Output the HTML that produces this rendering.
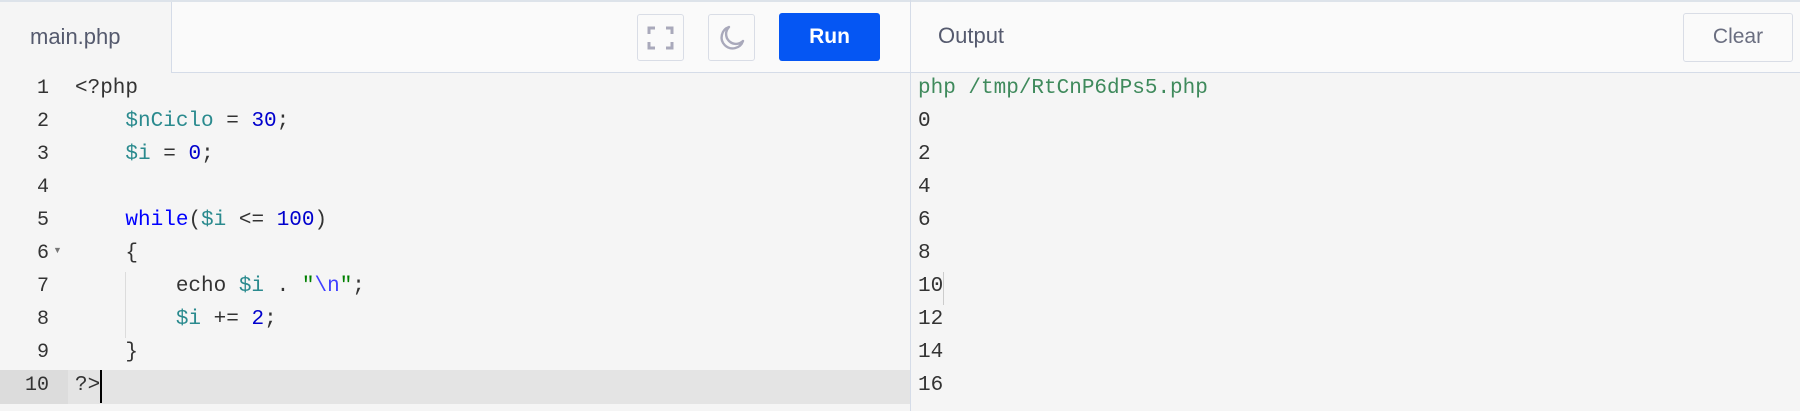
<!DOCTYPE html>
<html><head><meta charset="utf-8"><style>
*{margin:0;padding:0;box-sizing:border-box}
body{width:1800px;height:411px;background:#f5f5f5;position:relative;overflow:hidden;font-family:"Liberation Sans",sans-serif}
.topline{position:absolute;left:0;top:0;width:1800px;height:2px;background:#dde3ea}
.hdr{position:absolute;top:2px;height:71px;background:#fafafa;border-bottom:1px solid #d5dce8}
.tab{position:absolute;left:0;top:2px;width:172px;height:71px;background:#f5f5f5;border-right:1px solid #d5dce8}
.tab span{position:absolute;left:30px;top:22px;font-size:22px;color:#555a6e}
.btn{position:absolute;top:14px;height:47px;border:1px solid #d9dde6;border-radius:3px;background:#fafafa}
.run{position:absolute;left:779px;top:13px;width:101px;height:48px;background:#0556f3;border-radius:3px;color:#fff;font-weight:bold;font-size:21px;text-align:center;line-height:48px}
.div{position:absolute;left:910px;top:0;width:1px;height:411px;background:#d5dce8}
.code{position:absolute;font-family:"Liberation Mono",monospace;font-size:21px;line-height:33px;white-space:pre;color:#333}
.ln{position:absolute;left:0;width:49px;font-family:"Liberation Mono",monospace;font-size:20px;line-height:33px;color:#333;text-align:right;white-space:pre}
.v{color:#2a8a8e}.n{color:#0000cd}.k{color:#0000ff}.s{color:#008000}.e{color:#3f3fff}
</style></head><body>
<div class="topline"></div>
<div class="hdr" style="left:172px;width:738px"></div>
<div class="hdr" style="left:911px;width:889px"></div>
<div class="tab"><span>main.php</span></div>
<div class="btn" style="left:637px;width:47px">
<svg width="45" height="45" viewBox="0 0 45 45" style="position:absolute;left:0;top:0"><path d="M11 19v-6h6M28 13h6v6M34 27v6h-6M17 33h-6v-6" fill="none" stroke="#a9a9bb" stroke-width="3"/></svg></div>
<div class="btn" style="left:708px;width:47px">
<svg width="45" height="45" viewBox="0 0 45 45" style="position:absolute;left:0;top:0"><path d="M20 12a11 11 0 1 0 14 14a9 9 0 0 1 -14 -14z" fill="none" stroke="#a9a9bb" stroke-width="2.4" stroke-linejoin="round"/></svg></div>
<div class="run">Run</div>
<div class="div"></div>
<div style="position:absolute;left:938px;top:23px;font-size:22px;color:#555a6e">Output</div>
<div class="btn" style="left:1683px;top:13px;width:110px;height:49px"><span style="position:absolute;left:0;width:108px;text-align:center;top:11px;font-size:21px;color:#6a6e80">Clear</span></div>
<div style="position:absolute;left:0;top:370px;width:910px;height:34px;background:#e4e4e4"></div>
<div style="position:absolute;left:0;top:370px;width:68px;height:34px;background:#dcdcdc"></div>
<div style="position:absolute;left:100px;top:370px;width:2px;height:33px;background:#000"></div>
<div style="position:absolute;left:125px;top:272px;width:1px;height:66px;background:#dcdcdc"></div>
<div class="ln" style="top:72px">1
2
3
4
5
6
7
8
9
10</div>
<div style="position:absolute;left:53px;top:245px;font-size:9px;color:#777">▼</div>
<div class="code" style="left:75px;top:72px">&lt;?php
    <span class="v">$nCiclo</span> = <span class="n">30</span>;
    <span class="v">$i</span> = <span class="n">0</span>;

    <span class="k">while</span>(<span class="v">$i</span> &lt;= <span class="n">100</span>)
    {
        echo <span class="v">$i</span> . <span class="s">"</span><span class="e">\n</span><span class="s">"</span>;
        <span class="v">$i</span> += <span class="n">2</span>;
    }
?&gt;</div>
<div class="code" style="left:918px;top:72px"><span style="color:#3f8a5c">php /tmp/RtCnP6dPs5.php</span>
0
2
4
6
8
10
12
14
16</div>
<div style="position:absolute;left:943px;top:272px;width:1px;height:33px;background:#ccc"></div>
</body></html>
